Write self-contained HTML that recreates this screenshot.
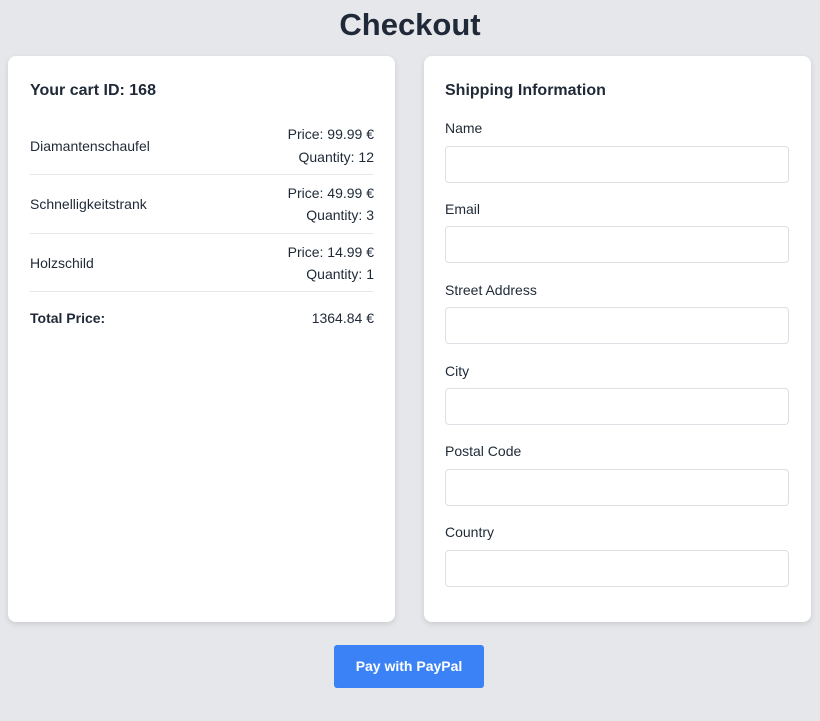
<!DOCTYPE html>
<html><head><style>
*{box-sizing:border-box;margin:0;padding:0}
body{width:820px;height:721px;background:#e5e7eb;font-family:"Liberation Sans",sans-serif;color:#1f2937;position:relative;overflow:hidden}
.a{position:absolute}
h1{position:absolute;top:7px;left:0;width:820px;text-align:center;font-size:31px;font-weight:bold;color:#1f2937}
.card{position:absolute;top:56px;height:566px;width:387px;background:#fff;border-radius:8px;box-shadow:0 2px 6px rgba(0,0,0,.12)}
.t{font-size:14px;line-height:20px;white-space:nowrap}
.r{text-align:right;right:21px}
.sep{position:absolute;left:22px;width:343px;height:1px;background:#e5e7eb}
.lab{font-size:14px;line-height:20px;position:absolute;left:21px}
.inp{position:absolute;left:21px;width:344px;height:37px;border:1px solid #dcdfe4;border-radius:4px}
.btn{position:absolute;left:334px;top:645px;width:150px;height:43px;background:#3b82f6;color:#fff;border-radius:3px;font-size:14px;font-weight:bold;text-align:center;line-height:43px}
</style></head><body>
<h1>Checkout</h1>
<div class="card" style="left:8px">
 <div class="a t" style="left:22px;top:25px;font-size:16px;font-weight:bold">Your cart ID: 168</div>
 <div class="a t" style="left:22px;top:80px">Diamantenschaufel</div>
 <div class="a t r" style="top:68px">Price: 99.99 €</div>
 <div class="a t r" style="top:91px">Quantity: 12</div>
 <div class="sep" style="top:118px"></div>
 <div class="a t" style="left:22px;top:138px">Schnelligkeitstrank</div>
 <div class="a t r" style="top:127px">Price: 49.99 €</div>
 <div class="a t r" style="top:149px">Quantity: 3</div>
 <div class="sep" style="top:177px"></div>
 <div class="a t" style="left:22px;top:197px">Holzschild</div>
 <div class="a t r" style="top:186px">Price: 14.99 €</div>
 <div class="a t r" style="top:208px">Quantity: 1</div>
 <div class="sep" style="top:235px"></div>
 <div class="a t" style="left:22px;top:252px;font-weight:bold">Total Price:</div>
 <div class="a t r" style="top:252px">1364.84 €</div>
</div>
<div class="card" style="left:424px">
 <div class="a t" style="left:21px;top:25px;font-size:16px;font-weight:bold">Shipping Information</div>
 <div class="lab" style="top:62px">Name</div><div class="inp" style="top:90px"></div>
 <div class="lab" style="top:143px">Email</div><div class="inp" style="top:170px"></div>
 <div class="lab" style="top:224px">Street Address</div><div class="inp" style="top:251px"></div>
 <div class="lab" style="top:305px">City</div><div class="inp" style="top:332px"></div>
 <div class="lab" style="top:385px">Postal Code</div><div class="inp" style="top:413px"></div>
 <div class="lab" style="top:466px">Country</div><div class="inp" style="top:494px"></div>
</div>
<div class="btn">Pay with PayPal</div>
</body></html>
